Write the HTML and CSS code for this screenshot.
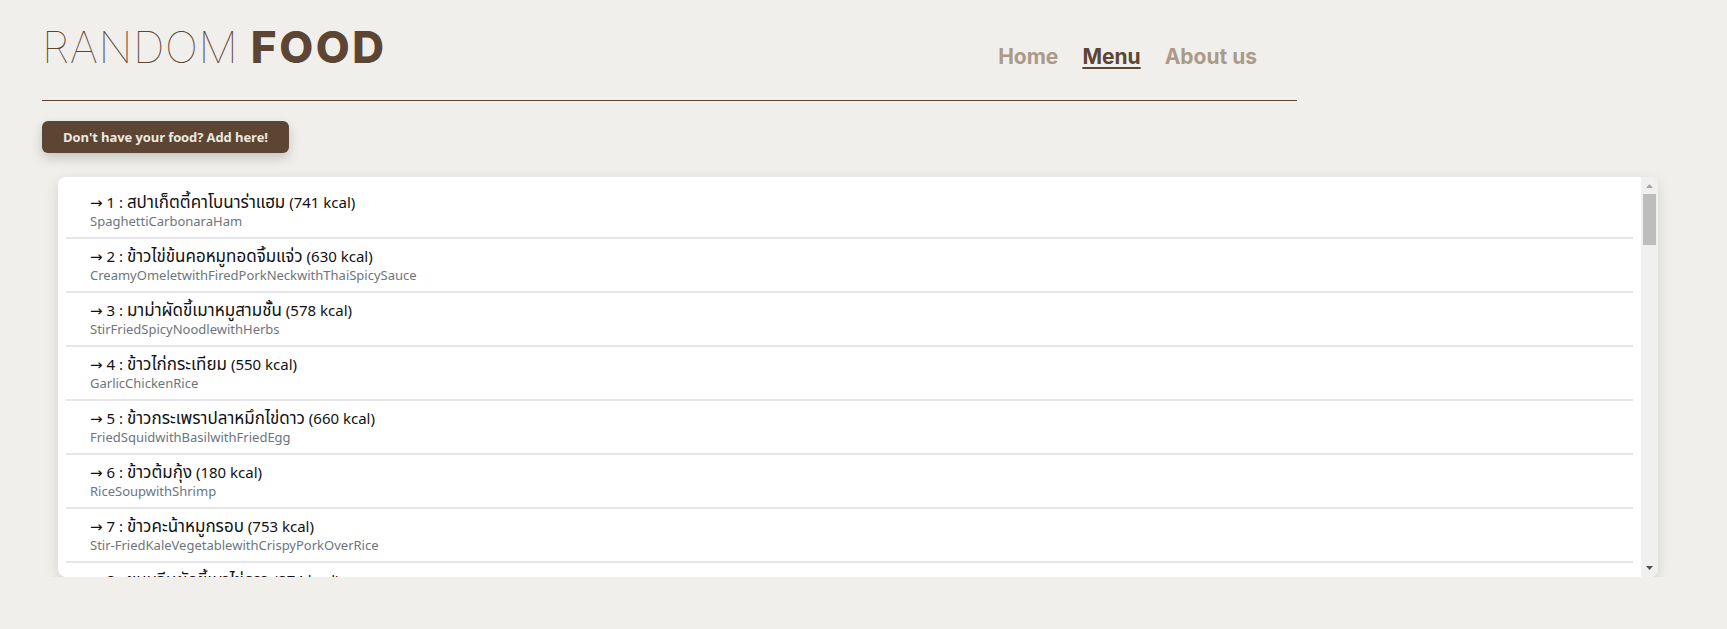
FILE: index.html
```html
<!DOCTYPE html>
<html lang="th">
<head>
<meta charset="utf-8">
<title>Random Food - Menu</title>
<link rel="stylesheet" href="styles.css">
</head>
<body>
<div class="page">
  <header class="header">
    <div class="logo"><span class="logo-thin">RANDOM</span> <span class="logo-bold">FOOD</span></div>
    <nav class="nav">
      <a class="nav-link" href="#">Home</a>
      <a class="nav-link active" href="#">Menu</a>
      <a class="nav-link" href="#">About us</a>
    </nav>
  </header>
  <button class="add-btn">Don't have your food? Add here!</button>
  <div class="card">
    <div class="viewport">
    <ul class="list">
      <li class="item"><div class="title"><span class="arr">→</span> 1 : <span class="th">สปาเก็ตตี้คาโบนาร่าแฮม</span> (741 kcal)</div><div class="sub">SpaghettiCarbonaraHam</div></li>
      <li class="item"><div class="title"><span class="arr">→</span> 2 : <span class="th">ข้าวไข่ข้นคอหมูทอดจิ้มแจ่ว</span> (630 kcal)</div><div class="sub">CreamyOmeletwithFiredPorkNeckwithThaiSpicySauce</div></li>
      <li class="item"><div class="title"><span class="arr">→</span> 3 : <span class="th">มาม่าผัดขี้เมาหมูสามชั้น</span> (578 kcal)</div><div class="sub">StirFriedSpicyNoodlewithHerbs</div></li>
      <li class="item"><div class="title"><span class="arr">→</span> 4 : <span class="th">ข้าวไก่กระเทียม</span> (550 kcal)</div><div class="sub">GarlicChickenRice</div></li>
      <li class="item"><div class="title"><span class="arr">→</span> 5 : <span class="th">ข้าวกระเพราปลาหมึกไข่ดาว</span> (660 kcal)</div><div class="sub">FriedSquidwithBasilwithFriedEgg</div></li>
      <li class="item"><div class="title"><span class="arr">→</span> 6 : <span class="th">ข้าวต้มกุ้ง</span> (180 kcal)</div><div class="sub">RiceSoupwithShrimp</div></li>
      <li class="item"><div class="title"><span class="arr">→</span> 7 : <span class="th">ข้าวคะน้าหมูกรอบ</span> (753 kcal)</div><div class="sub">Stir-FriedKaleVegetablewithCrispyPorkOverRice</div></li>
      <li class="item"><div class="title"><span class="arr">→</span> 8 : <span class="th">ขนมจีนผัดขี้เมาไข่ดาว</span> (874 kcal)</div><div class="sub">StirFriedRiceNoodlewithFriedEgg</div></li>
      <li class="item"><div class="title"><span class="arr">→</span> 9 : <span class="th">ข้าวผัดกุ้ง</span> (595 kcal)</div><div class="sub">FriedRicewithShrimp</div></li>
      <li class="item"><div class="title"><span class="arr">→</span> 10 : <span class="th">ผัดไทยกุ้งสด</span> (545 kcal)</div><div class="sub">PadThaiwithFreshShrimp</div></li>
      <li class="item"><div class="title"><span class="arr">→</span> 11 : <span class="th">ข้าวมันไก่</span> (596 kcal)</div><div class="sub">HainaneseChickenRice</div></li>
      <li class="item"><div class="title"><span class="arr">→</span> 12 : <span class="th">ข้าวขาหมู</span> (690 kcal)</div><div class="sub">BraisedPorkLegwithRice</div></li>
      <li class="item"><div class="title"><span class="arr">→</span> 13 : <span class="th">ก๋วยเตี๋ยวต้มยำ</span> (400 kcal)</div><div class="sub">TomYumNoodleSoup</div></li>
      <li class="item"><div class="title"><span class="arr">→</span> 14 : <span class="th">ราดหน้าหมู</span> (405 kcal)</div><div class="sub">RiceNoodleinGravywithPork</div></li>
      <li class="item"><div class="title"><span class="arr">→</span> 15 : <span class="th">ผัดซีอิ๊วหมู</span> (679 kcal)</div><div class="sub">StirFriedNoodlewithSoySauceandPork</div></li>
      <li class="item"><div class="title"><span class="arr">→</span> 16 : <span class="th">ข้าวหมูแดง</span> (540 kcal)</div><div class="sub">RedRoastedPorkwithRice</div></li>
      <li class="item"><div class="title"><span class="arr">→</span> 17 : <span class="th">ข้าวหมกไก่</span> (534 kcal)</div><div class="sub">ChickenBiryani</div></li>
      <li class="item"><div class="title"><span class="arr">→</span> 18 : <span class="th">ต้มยำกุ้ง</span> (65 kcal)</div><div class="sub">TomYumGoong</div></li>
      <li class="item"><div class="title"><span class="arr">→</span> 19 : <span class="th">แกงเขียวหวานไก่</span> (240 kcal)</div><div class="sub">GreenCurrywithChicken</div></li>
      <li class="item"><div class="title"><span class="arr">→</span> 20 : <span class="th">ส้มตำไทย</span> (120 kcal)</div><div class="sub">ThaiPapayaSalad</div></li>
      <li class="item"><div class="title"><span class="arr">→</span> 21 : <span class="th">ไก่ย่าง</span> (165 kcal)</div><div class="sub">GrilledChicken</div></li>
      <li class="item"><div class="title"><span class="arr">→</span> 22 : <span class="th">ลาบหมู</span> (250 kcal)</div><div class="sub">SpicyMincedPorkSalad</div></li>
      <li class="item"><div class="title"><span class="arr">→</span> 23 : <span class="th">ข้าวผัดอเมริกัน</span> (790 kcal)</div><div class="sub">AmericanFriedRice</div></li>
      <li class="item"><div class="title"><span class="arr">→</span> 24 : <span class="th">ข้าวหน้าเป็ด</span> (495 kcal)</div><div class="sub">RoastedDuckwithRice</div></li>
      <li class="item"><div class="title"><span class="arr">→</span> 25 : <span class="th">ข้าวไข่เจียว</span> (445 kcal)</div><div class="sub">OmeletwithRice</div></li>
      <li class="item"><div class="title"><span class="arr">→</span> 26 : <span class="th">ก๋วยจั๊บ</span> (240 kcal)</div><div class="sub">RolledNoodleSoup</div></li>
      <li class="item"><div class="title"><span class="arr">→</span> 27 : <span class="th">บะหมี่หมูแดง</span> (360 kcal)</div><div class="sub">EggNoodlewithRedPork</div></li>
      <li class="item"><div class="title"><span class="arr">→</span> 28 : <span class="th">เย็นตาโฟ</span> (290 kcal)</div><div class="sub">YenTaFoNoodleSoup</div></li>
      <li class="item"><div class="title"><span class="arr">→</span> 29 : <span class="th">ข้าวซอยไก่</span> (660 kcal)</div><div class="sub">KhaoSoiChicken</div></li>
      <li class="item"><div class="title"><span class="arr">→</span> 30 : <span class="th">ขนมจีนน้ำยา</span> (315 kcal)</div><div class="sub">RiceNoodlewithFishCurry</div></li>
      <li class="item"><div class="title"><span class="arr">→</span> 31 : <span class="th">ผัดกะเพราหมูสับ</span> (580 kcal)</div><div class="sub">StirFriedMincedPorkwithBasil</div></li>
      <li class="item"><div class="title"><span class="arr">→</span> 32 : <span class="th">ข้าวผัดปู</span> (577 kcal)</div><div class="sub">CrabFriedRice</div></li>
      <li class="item"><div class="title"><span class="arr">→</span> 33 : <span class="th">ไข่พะโล้</span> (380 kcal)</div><div class="sub">BraisedEggandPorkinFiveSpiceSoup</div></li>
      <li class="item"><div class="title"><span class="arr">→</span> 34 : <span class="th">ต้มข่าไก่</span> (210 kcal)</div><div class="sub">ChickenCoconutSoup</div></li>
      <li class="item"><div class="title"><span class="arr">→</span> 35 : <span class="th">แกงจืดเต้าหู้หมูสับ</span> (85 kcal)</div><div class="sub">ClearSoupwithTofuandMincedPork</div></li>
      <li class="item"><div class="title"><span class="arr">→</span> 36 : <span class="th">ผัดผักบุ้งไฟแดง</span> (190 kcal)</div><div class="sub">StirFriedMorningGlory</div></li>
      <li class="item"><div class="title"><span class="arr">→</span> 37 : <span class="th">หมูทอดกระเทียม</span> (460 kcal)</div><div class="sub">FriedPorkwithGarlic</div></li>
      <li class="item"><div class="title"><span class="arr">→</span> 38 : <span class="th">ไก่ผัดเม็ดมะม่วงหิมพานต์</span> (385 kcal)</div><div class="sub">StirFriedChickenwithCashewNuts</div></li>
      <li class="item"><div class="title"><span class="arr">→</span> 39 : <span class="th">ปลากะพงทอดน้ำปลา</span> (430 kcal)</div><div class="sub">FriedSeaBasswithFishSauce</div></li>
      <li class="item"><div class="title"><span class="arr">→</span> 40 : <span class="th">ข้าวต้มปลา</span> (220 kcal)</div><div class="sub">FishRiceSoup</div></li>
      <li class="item"><div class="title"><span class="arr">→</span> 41 : <span class="th">โจ๊กหมู</span> (160 kcal)</div><div class="sub">PorkCongee</div></li>
      <li class="item"><div class="title"><span class="arr">→</span> 42 : <span class="th">สุกี้น้ำ</span> (380 kcal)</div><div class="sub">SukiyakiSoup</div></li>
      <li class="item"><div class="title"><span class="arr">→</span> 43 : <span class="th">ข้าวคลุกกะปิ</span> (610 kcal)</div><div class="sub">RiceMixedwithShrimpPaste</div></li>
      <li class="item"><div class="title"><span class="arr">→</span> 44 : <span class="th">หอยทอด</span> (720 kcal)</div><div class="sub">CrispyMusselPancake</div></li>
      <li class="item"><div class="title"><span class="arr">→</span> 45 : <span class="th">ผัดพริกแกงหมู</span> (450 kcal)</div><div class="sub">StirFriedPorkwithRedCurryPaste</div></li>
      <li class="item"><div class="title"><span class="arr">→</span> 46 : <span class="th">ข้าวหน้าไก่</span> (470 kcal)</div><div class="sub">ChickenGravyoverRice</div></li>
      <li class="item"><div class="title"><span class="arr">→</span> 47 : <span class="th">ก๋วยเตี๋ยวเรือ</span> (350 kcal)</div><div class="sub">BoatNoodles</div></li>
      <li class="item"><div class="title"><span class="arr">→</span> 48 : <span class="th">ข้าวมันไก่ทอด</span> (693 kcal)</div><div class="sub">FriedChickenwithOilyRice</div></li>
      <li class="item"><div class="title"><span class="arr">→</span> 49 : <span class="th">ยำวุ้นเส้น</span> (120 kcal)</div><div class="sub">SpicyGlassNoodleSalad</div></li>
      <li class="item"><div class="title"><span class="arr">→</span> 50 : <span class="th">แกงมัสมั่นไก่</span> (325 kcal)</div><div class="sub">MassamanCurrywithChicken</div></li>
      <li class="item"><div class="title"><span class="arr">→</span> 51 : <span class="th">ข้าวผัดแหนม</span> (560 kcal)</div><div class="sub">FriedRicewithFermentedPork</div></li>
      <li class="item"><div class="title"><span class="arr">→</span> 52 : <span class="th">หมูกระเทียมพริกไทย</span> (520 kcal)</div><div class="sub">FriedPorkwithGarlicandPepper</div></li>
      <li class="item"><div class="title"><span class="arr">→</span> 53 : <span class="th">ข้าวเหนียวมะม่วง</span> (480 kcal)</div><div class="sub">MangoStickyRice</div></li>
    </ul>
    </div>
    <div class="scrollbar">
      <div class="sb-btn">
        <svg width="17" height="17" viewBox="0 0 17 17"><path d="M5 11h7L8.5 7z" fill="#a3a3a3"/></svg>
      </div>
      <div class="sb-track"><div class="sb-thumb"></div></div>
      <div class="sb-btn">
        <svg width="17" height="17" viewBox="0 0 17 17"><path d="M5 6h7L8.5 10z" fill="#505050"/></svg>
      </div>
    </div>
  </div>
</div>
</body>
</html>
```

FILE: styles.css
```css
html, body {
  margin: 0;
  padding: 0;
}

body {
  background: #f0efeb;
  font-family: "Noto Sans", "Noto Sans Thai", "Loma", "Garuda", "Open Sans", sans-serif;
  color: #212529;
}

.page {
  padding: 0 0 0 42px;
}

.header {
  width: 1255px;
  height: 101px;
  box-sizing: border-box;
  display: flex;
  justify-content: space-between;
  align-items: flex-start;
  border-bottom: 1px solid #5c4532;
}

.logo {
  font-family: "Inter", sans-serif;
  font-size: 44px;
  line-height: 1;
  color: #5c4532;
  margin-top: 25px;
  white-space: nowrap;
}

.logo-thin {
  font-weight: 100;
  letter-spacing: 0.6px;
}

.logo-bold {
  font-weight: 800;
  letter-spacing: 2.6px;
}

.nav {
  display: flex;
  gap: 24px;
  margin-top: 44px;
  margin-right: 40px;
}

.nav-link {
  font-family: "Inter", sans-serif;
  font-weight: 700;
  font-size: 21px;
  line-height: 26px;
  color: #ab9a88;
  text-decoration: none;
}

.nav-link.active {
  color: #5c4532;
  text-decoration: underline;
  text-underline-offset: 3px;
  text-decoration-thickness: 2px;
}

.add-btn {
  display: block;
  margin-top: 20px;
  width: 247px;
  height: 32px;
  border: none;
  border-radius: 6px;
  background: #5c4532;
  color: #ede8e2;
  font-family: "Open Sans", sans-serif;
  font-weight: 700;
  font-size: 13px;
  letter-spacing: -0.1px;
  padding: 0;
  box-shadow: 0 5px 12px rgba(0, 0, 0, 0.18);
  cursor: pointer;
}

.card {
  margin: 24px 0 0 16px;
  width: 1600px;
  height: 400px;
  display: flex;
  background: #fff;
  border-radius: 8px;
  box-shadow: 0 4px 14px rgba(0, 0, 0, 0.12);
  overflow: hidden;
}

.viewport {
  flex: 1;
  overflow: hidden;
}

.list {
  list-style: none;
  margin: 0;
  padding: 8px;
}

.item {
  padding: 7px 24px;
  border-bottom: 2px solid #e5e5ea;
}

.title {
  font-size: 15px;
  line-height: 21px;
  height: 21px;
  color: #111;
  white-space: nowrap;
}

.arr {
  font-family: "DejaVu Sans", sans-serif;
  font-size: 15px;
  line-height: 1;
}

.th {
  font-size: 17px;
  line-height: 1;
}

.sub {
  font-size: 13px;
  line-height: 17px;
  color: #6c757d;
}

.scrollbar {
  width: 17px;
  display: flex;
  flex-direction: column;
  background: #f0f0f0;
}

.sb-btn {
  height: 17px;
  flex: none;
}

.sb-btn svg {
  display: block;
}

.sb-track {
  flex: 1;
  padding: 0 2px;
}

.sb-thumb {
  height: 51px;
  background: #bdbdbd;
}
```
